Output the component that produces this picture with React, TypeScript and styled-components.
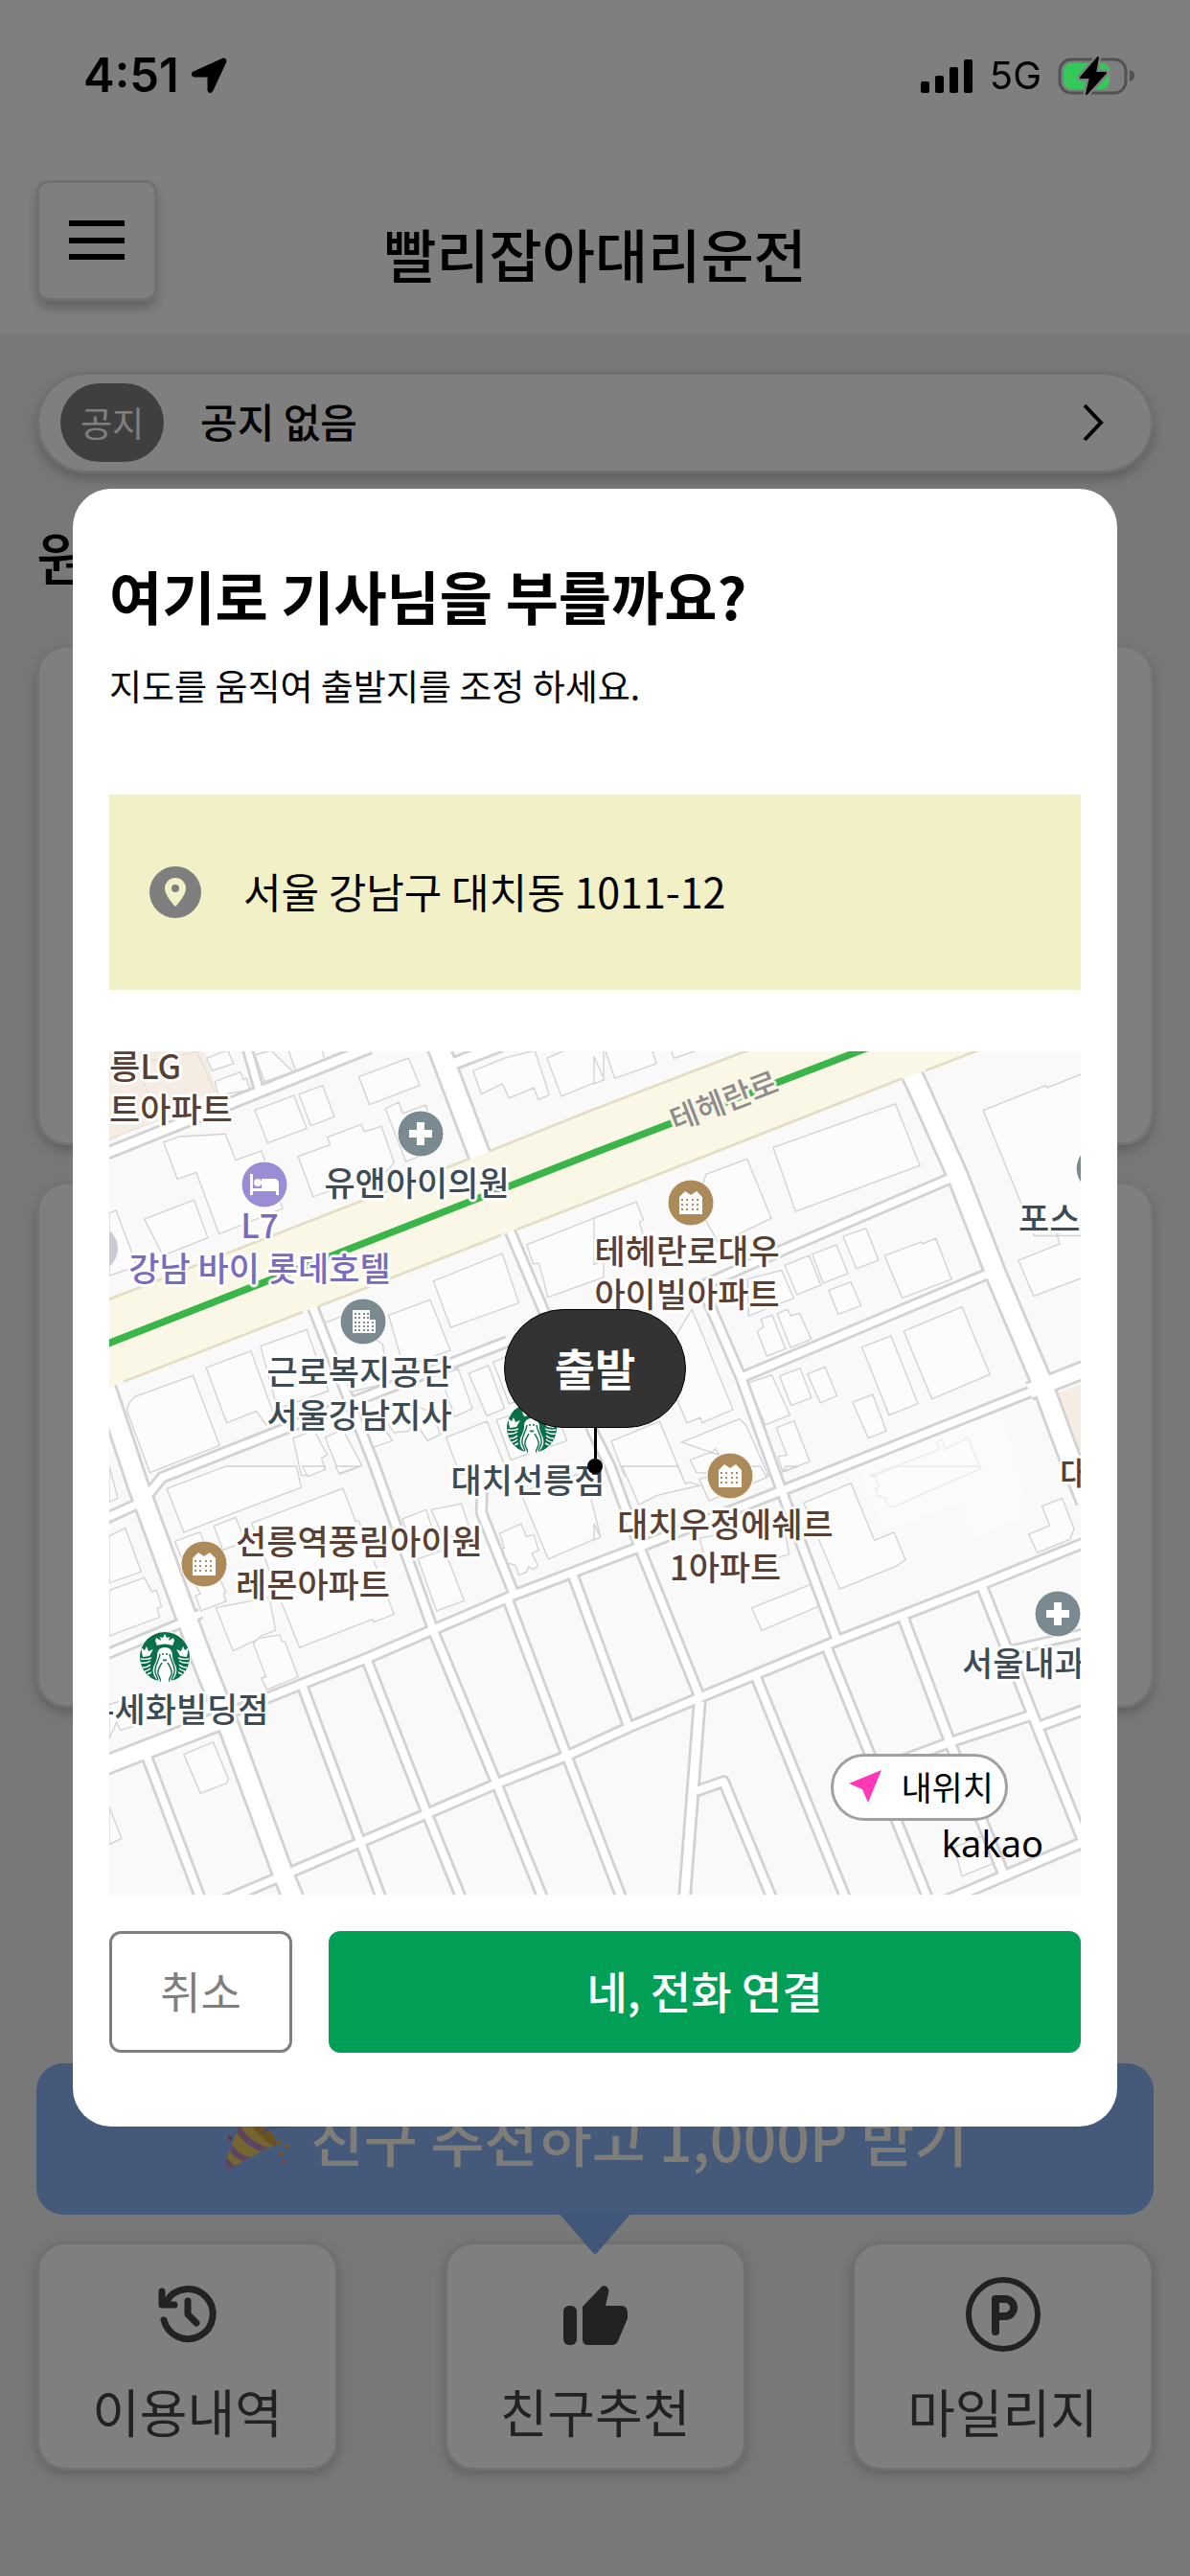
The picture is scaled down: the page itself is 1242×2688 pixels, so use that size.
import React from 'react';
import styled, { createGlobalStyle } from 'styled-components';

const GlobalStyle = createGlobalStyle`
  * { box-sizing: border-box; }
  body {
    margin: 0;
    background: #f0f0f0;
    color: #000;
    font-family: 'Noto Sans CJK KR', 'Noto Sans', sans-serif;
  }
  h1, h2, p { margin: 0; }
  button { font-family: inherit; color: inherit; padding: 0; cursor: pointer; }
`;

/* ---------- page behind the dialog ---------- */

const Page = styled.div`
  min-height: 100vh;
  display: flex;
  flex-direction: column;
`;

const Header = styled.header`
  background: #fff;
  padding-bottom: 34px;
`;

/* The system status bar stays above the dimmed overlay. */
const StatusBar = styled.div`
  position: relative;
  z-index: 3;
  display: flex;
  justify-content: space-between;
  align-items: center;
  height: 188px;
  padding: 0 58px 30px 87px;
  font-family: Inter, 'Noto Sans', sans-serif;
`;

const StatusGroup = styled.div<{ $gap: number }>`
  display: flex;
  align-items: center;
  gap: ${(p) => p.$gap}px;
`;

const Clock = styled.span`
  font-size: 49px;
  font-weight: 600;
  line-height: 60px;
`;

const Network = styled.span`
  font-size: 40px;
  line-height: 60px;
`;

const TitleRow = styled.div`
  display: grid;
  grid-template-columns: 1fr auto 1fr;
  align-items: end;
  padding: 0 38px;
`;

const MenuButton = styled.button`
  display: flex;
  align-items: center;
  justify-content: center;
  width: 126px;
  height: 126px;
  background: #fff;
  border: 3px solid #e0e0e0;
  border-radius: 12px;
  box-shadow: 0 8px 12px rgba(0, 0, 0, 0.22);
`;

const AppTitle = styled.h1`
  font-size: 60px;
  font-weight: 500;
  line-height: 100px;
`;

const Main = styled.main`
  flex: 1;
  display: flex;
  flex-direction: column;
  padding: 40px 38px 110px;
`;

const Notice = styled.button`
  display: flex;
  align-items: center;
  gap: 38px;
  width: 100%;
  height: 106px;
  padding: 0 48px 0 22px;
  background: #fff;
  border: 3px solid #e0e0e0;
  border-radius: 53px;
  box-shadow: 0 6px 12px rgba(0, 0, 0, 0.22);
`;

const NoticeBadge = styled.span`
  width: 108px;
  padding-bottom: 2px;
  border-radius: 42px;
  background: #7f7f7f;
  color: #fff;
  font-size: 36px;
  line-height: 80px;
`;

const NoticeText = styled.span`
  flex: 1;
  padding-bottom: 4px;
  text-align: left;
  font-size: 42px;
  font-weight: 500;
  line-height: 60px;
`;

const SectionTitle = styled.h2`
  margin: 46px 0 53px;
  font-size: 60px;
  font-weight: 500;
  line-height: 80px;
`;

const Cards = styled.div`
  display: grid;
  gap: 38px;
`;

const Card = styled.section<{ $height: number }>`
  height: ${(p) => p.$height}px;
  background: #fff;
  border: 3px solid #e6e6e6;
  border-radius: 32px;
  box-shadow: 0 6px 12px rgba(0, 0, 0, 0.2);
`;

const Footer = styled.footer`
  display: grid;
  gap: 28px;
  margin-top: auto;
`;

const Banner = styled.button`
  position: relative;
  display: flex;
  align-items: center;
  justify-content: center;
  gap: 16px;
  height: 158px;
  padding-bottom: 6px;
  border: 0;
  border-radius: 28px;
  background: #8ab4f4;
  color: #fffaf0;
  font-size: 61px;
  font-weight: 500;
`;

const BannerTail = styled.svg`
  position: absolute;
  left: 50%;
  top: 156px;
  margin-left: -39px;
  z-index: 1;
`;

const Shortcuts = styled.nav`
  display: flex;
  justify-content: space-between;
`;

const Shortcut = styled.button`
  display: flex;
  flex-direction: column;
  align-items: center;
  justify-content: center;
  gap: 26px;
  width: 315px;
  height: 239px;
  padding-top: 10px;
  background: #fff;
  border: 3px solid #e0e0e0;
  border-radius: 30px;
  box-shadow: 0 4px 12px rgba(0, 0, 0, 0.2);
  color: #444;
  font-size: 54px;
  line-height: 72px;
`;

/* ---------- dialog ---------- */

const Overlay = styled.div`
  position: fixed;
  inset: 0;
  z-index: 2;
  display: flex;
  align-items: center;
  padding: 40px 76px 0;
  background: rgba(0, 0, 0, 0.5);
`;

const Dialog = styled.div`
  flex: 1;
  padding: 75px 38px 77px;
  background: #fff;
  border-radius: 40px;
`;

const DialogTitle = styled.h2`
  font-size: 60px;
  font-weight: 600;
  line-height: 72px;
`;

const DialogHint = styled.p`
  margin-top: 34px;
  font-size: 37px;
  line-height: 48px;
`;

const Address = styled.div`
  display: flex;
  align-items: center;
  gap: 44px;
  height: 204px;
  margin: 90px 0 64px;
  padding: 0 42px;
  background: #f2f0c6;
`;

const AddressText = styled.span`
  padding-bottom: 4px;
  font-size: 43px;
  line-height: 60px;
`;

const Actions = styled.div`
  display: flex;
  gap: 38px;
  margin-top: 38px;
`;

const ActionButton = styled.button<{ $primary?: boolean }>`
  flex: ${(p) => (p.$primary ? '1' : '0 0 191px')};
  height: 127px;
  padding-bottom: 4px;
  border: 3px solid ${(p) => (p.$primary ? '#02a057' : '#7f7f7f')};
  border-radius: 12px;
  background: ${(p) => (p.$primary ? '#02a057' : '#fff')};
  color: ${(p) => (p.$primary ? '#fff' : '#7f7f7f')};
  font-size: 46px;
  font-weight: ${(p) => (p.$primary ? 500 : 400)};
`;

/* ---------- map ---------- */

const MapFrame = styled.div`
  position: relative;
  height: 880px;
  overflow: hidden;
  background: #f9f9f9;
`;

const MapDrawing = styled.svg`
  display: block;
  width: 100%;
  height: 100%;
`;

const halo = (c: string) =>
  `3px 0 1px ${c}, -3px 0 1px ${c}, 0 3px 1px ${c}, 0 -3px 1px ${c}, 2px 2px 1px ${c}, -2px -2px 1px ${c}, 2px -2px 1px ${c}, -2px 2px 1px ${c}`;

const Label = styled.span<{ $x: number; $y: number; $color: string; $left?: boolean }>`
  position: absolute;
  left: ${(p) => p.$x}px;
  top: ${(p) => p.$y}px;
  transform: translate(${(p) => (p.$left ? '0' : '-50%')}, -50%);
  text-align: ${(p) => (p.$left ? 'left' : 'center')};
  color: ${(p) => p.$color};
  font-size: 35px;
  font-weight: 500;
  line-height: 45px;
  white-space: pre;
  text-shadow: ${halo('#fff')};
`;

const RoadName = styled(Label)`
  transform: translate(-50%, -50%) rotate(-21deg);
  font-size: 32px;
  text-shadow: ${halo('#fbf7e6')};
`;

const Marker = styled.svg<{ $x: number; $y: number; $size: number }>`
  position: absolute;
  left: ${(p) => p.$x - p.$size / 2}px;
  top: ${(p) => p.$y - p.$size / 2}px;
`;

const Departure = styled.div`
  position: absolute;
  left: 50%;
  top: 269px;
  transform: translateX(-50%);
  display: flex;
  flex-direction: column;
  align-items: center;
`;

const DepartureLabel = styled.span`
  width: 190px;
  padding-bottom: 4px;
  border: 1px solid #000;
  border-radius: 62px;
  background: #333;
  color: #fff;
  font-size: 46px;
  font-weight: 700;
  line-height: 118px;
  text-align: center;
`;

const DepartureStem = styled.span`
  width: 3px;
  height: 32px;
  background: #000;
`;

const DepartureDot = styled.span`
  width: 16px;
  height: 16px;
  border-radius: 50%;
  background: #000;
`;

const LocateButton = styled.button`
  position: absolute;
  right: 76px;
  bottom: 77px;
  display: flex;
  align-items: center;
  gap: 18px;
  height: 70px;
  padding: 0 12px 2px 14px;
  background: #fff;
  border: 3px solid #a0a0a0;
  border-radius: 35px;
  font-size: 35px;
`;

const Provider = styled.span`
  position: absolute;
  right: 39px;
  bottom: 30px;
  font-family: 'Noto Sans', sans-serif;
  font-size: 38px;
  line-height: 48px;
`;

const SLATE = '#3d4b55';
const BROWN = '#5a4033';
const VIOLET = '#7a6bbd';
const EDGE = '#d2d2d2';

/* Street centre lines, drawn once as a grey casing and once as a white surface. */
const streets: { w: number; d: string }[] = [
  { w: 44, d: 'M0 345L480 152L830 12' },
  { w: 38, d: 'M442 0L485 150' },
  { w: 78, d: 'M1040 0L1180 370' },
  { w: 46, d: 'M1070 70L1240 5' },
  { w: 74, d: 'M-20 1010L15 1110L105 1380L300 1910L395 2150L555 2585L590 2670' },
  { w: 40, d: 'M0 1485L120 1430L180 1355L760 1125L1260 930' },
  { w: 40, d: 'M648 815L845 1320L1032 1845L1225 2310L1370 2670' },
  { w: 40, d: 'M1265 580L1375 840L1530 1220L1580 1320L1675 1580L1860 2040' },
  { w: 68, d: 'M0 2255L400 2100' },
  { w: 40, d: 'M380 2095L820 1920L1280 1722L1665 1575L2120 1395' },
  { w: 40, d: 'M2120 1395L2900 1085' },
  { w: 62, d: 'M2890 1085L3070 1015' },
  { w: 40, d: 'M370 2678L555 2600L800 2495L1225 2312L1445 2225L1640 2135L1855 2045L2290 1865L2740 1690L3070 1556' },
  { w: 38, d: 'M0 1910L240 1810L300 1780' },
  { w: 40, d: 'M620 2010L800 2495L865 2670' },
  { w: 40, d: 'M820 1925L1010 2410L1115 2670' },
  { w: 40, d: 'M1260 1735L1445 2225L1620 2680' },
  { w: 40, d: 'M1460 1650L1635 2125' },
  { w: 40, d: 'M1180 1400L1178 1465L1280 1720' },
  { w: 44, d: 'M1860 2055L1812 2680' },
  { w: 40, d: 'M1850 2335L1935 2305L2090 2680' },
  { w: 40, d: 'M2035 1975L2320 2680' },
  { w: 40, d: 'M2255 1880L2585 2700' },
  { w: 40, d: 'M1880 790L1990 1045L2110 1380L2290 1865' },
  { w: 42, d: 'M2495 1790L2645 2190L2812 2600' },
  { w: 42, d: 'M2740 1690L2912 2125L3070 2520' },
  { w: 40, d: 'M2420 2265L2650 2180L2890 2100' },
  { w: 40, d: 'M2915 2135L3070 2078' },
  { w: 42, d: 'M2600 2690L3070 2490' },
  { w: 74, d: 'M2510 70L2535 120L2665 410L2790 730L2930 1060L3030 1330L3070 1430' },
  { w: 40, d: 'M1870 755L2130 640L2680 405' },
  { w: 40, d: 'M1985 1045L2770 715' },
  { w: 40, d: 'M130 2220L300 2670' },
  { w: 36, d: 'M2830 1895L3070 1840' },
];

/* Building outlines, one list per quarter of the map. */
const northWest =
  'M320 45L385 20L404 62L337 84Z M345 118L425 88L434 112L444 108L455 145L355 160Z M470 35L520 21L590 88L500 118Z M600 92L575 21H680L690 55Z M795 103L950 45L985 130L828 190Z M470 207L592 162L632 265L510 310Z M608 158L682 130L718 228L645 256Z M878 203L920 183L932 218L1005 192L1040 330L942 368Z M185 308L235 290L378 282L410 364L490 335L557 515L358 594L287 402L228 423Z M125 548L280 488L323 606L183 662Z M605 352L705 316L697 292L802 252L812 275L866 258L905 372L880 400L652 478Z M15 530L36 520L102 695L15 725Z M1152 85L1250 45L1345 21L1390 160L1356 174L1342 138L1264 170L1244 125L1178 157Z M1383 45L1440 21H1560V110L1428 164Z M1028 742L1243 655L1295 810L1082 886Z M888 848L1018 800L1081 958L935 1010Z M488 945L632 893L700 1085L540 1140Z M318 1012L458 960L530 1160L505 1190L475 1148L382 1184Z M70 1145Q75 1118 97 1102L277 1037L360 1255L142 1340Z M675 878L745 850L870 940L885 1060L760 1090Z M1320 628L1560 533V730L1385 792L1372 735L1356 685L1340 688Z M1050 1040L1105 1015L1150 1140L1095 1165Z M1138 1030L1200 1005L1250 1140L1195 1163Z M1068 1230L1195 1180L1260 1340L1110 1345Z M840 1150L900 1240L835 1262L800 1170Z M905 1215L950 1210L970 1180L1000 1225L1010 1240L1050 1220L1020 1150L940 1120L860 1150Z M590 1232L655 1208L696 1284L678 1295L690 1325L640 1348L615 1348Z M690 1230L745 1205L805 1318L735 1345Z M1215 995L1300 960L1340 1100L1265 1125Z M1225 1175L1400 1120L1445 1240L1270 1300Z';
const northEast =
  'M35 21L65 108L195 62L182 21Z M240 21L250 46L330 18Z M0 40L32 112L0 125Z M560 324L942 188L1018 380L630 524Z M350 408L478 360L554 545L390 625L320 500Z M0 545L132 494L154 550L142 558L160 620L0 690Z M778 602L850 577L889 676L820 703Z M682 658L757 628L794 718L716 748Z M596 692L672 662L709 754L634 784Z M480 735L586 708L624 795L483 850Z M733 770L803 745L834 818L763 845Z M908 662L1022 620L1026 625L1068 608L1117 736L963 794Z M510 898L530 886L522 860L557 848L598 953L540 976Z M572 843L605 830L614 850L642 842L679 923L614 949Z M837 948L928 913L1012 1124L922 1160Z M968 898L1150 822L1237 1033L1056 1110Z M580 1038L644 1014L679 1106L616 1130Z M667 1032L722 1010L759 1100L707 1122Z M808 1120L871 1096L913 1210L857 1232Z M570 1200L625 1178L674 1305L590 1338L575 1290L602 1285Z M480 1060L555 1035L612 1160L535 1190Z M1216 208L1412 130L1416 138L1530 92V600L1376 600Z M1326 677L1456 625L1445 595L1530 565V730L1374 788Z M274 1245L455 1172L475 1192L545 1350L320 1340L300 1300L370 1275L380 1265L392 1285Z M54 1242L205 1180L275 1350H95Z M290 1185L210 990L305 830L325 875L434 1143L338 1184L332 1168Z M860 1350L1080 1268L1070 1245L1087 1236L1098 1268L1168 1230L1208 1325L1140 1355Z';
const southWest =
  'M195 70L380 0H600L615 66L248 206Z M618 0L636 32L690 10L686 0Z M722 0L733 22L800 0Z M15 0L42 100L15 112Z M15 218L65 193L115 330L15 365Z M15 388L125 348L148 392L162 388L178 438L165 445L172 472L15 530Z M220 235L298 206L315 245L380 395L372 398L380 422L302 452L285 405L300 398L260 330Z M342 187L410 160L440 235L370 262Z M460 178L745 69L785 172L795 172L905 462L842 487L838 478L610 566L555 430Z M348 442L515 410L535 512L485 532L480 540L402 577Z M465 553L483 537L548 527L555 548L565 550L605 658L508 698L490 662L505 658Z M930 165L1005 136L1030 210L960 235Z M1022 136L1115 117L1145 205L1060 225Z M980 290L1062 260L1124 420L1038 452Z M1300 80L1500 20L1550 220L1387 290Z M1235 210L1302 180L1318 220L1342 214L1357 262L1335 272L1355 310L1342 322L1325 314L1320 330L1295 340L1285 310L1255 300L1235 262L1250 255Z M248 900L340 862L388 978L382 990L300 1022Z M15 1065L54 1163L15 1182Z M15 745L60 730L95 810L50 825L38 800L15 850Z';
const southEast =
  'M88 0L140 120L200 90L330 60L315 55L300 50L285 55L262 0Z M328 40L500 0H520L540 35L360 108Z M590 15L640 0H600Z M655 115L803 53L876 232L937 206L973 292L945 312L768 384L705 235Z M878 30L950 0H1205L1210 6L940 125L920 127L910 100L885 92L880 70L890 65Z M1400 125L1463 100L1500 195L1488 228L1385 270L1358 212L1424 185Z M493 443L675 370L705 436L524 513Z M330 225L590 175L610 275L360 345Z M1125 1190L1215 1155L1250 1240L1150 1280Z M0 180L20 222L0 230Z';

function StreetMap() {
  return (
    <MapDrawing viewBox="15 21 3036 2640" preserveAspectRatio="xMidYMid slice" aria-hidden="true">
      <path fill="#f5ede3" d="M0 0H305L350 150L200 215L15 305Z" />
      <path fill="none" stroke="#e3dad0" strokeWidth="3" d="M15 75L60 60M140 55L290 25L345 150M120 115L140 160M15 298L230 215" />
      <path fill="#f5ede3" d="M2950 1100L3060 1060V1400L3010 1280Z" />
      <g fill="#fcfcfc" stroke={EDGE} strokeWidth="4">
        <path d={northWest} />
        <path d={northEast} transform="translate(1530 0)" />
        <path d={southWest} transform="translate(0 1320)" />
        <path d={southEast} transform="translate(1530 1320)" />
      </g>
      <path
        fill="#fcfcfc"
        d="M2350 1320L2800 1140L2880 1400L2860 1485L2715 1542L2670 1440L2430 1525Z"
        opacity="0.6"
      />
      <g fill="none" stroke={EDGE} strokeLinejoin="round">
        {streets.map((s) => (
          <path key={s.d} d={s.d} strokeWidth={s.w} />
        ))}
      </g>
      <g fill="none" stroke="#fff" strokeLinejoin="round">
        {streets.map((s) => (
          <path key={s.d} d={s.d} strokeWidth={s.w - 17} />
        ))}
      </g>
      <path
        d="M0 804L1140 360L1205 335L1530 205L2030 13H2750L2565 84L2490 110L1530 487L1240 598L670 820L620 838L60 1056L0 1080Z"
        fill="#fbf7e6"
      />
      <path
        d="M0 804L1140 360M1205 335L1530 205L2030 13M2750 13L2565 84M2490 110L1530 487L1290 580M1240 598L670 820M620 838L60 1056"
        fill="none"
        stroke="#e3ddc2"
        strokeWidth="8"
      />
      <path d="M0 941L1530 341L2400 7" fill="none" stroke="#3ab54a" strokeWidth="22" />
      <circle cx="-30" cy="640" r="72" fill="#c9cbd0" />
      <circle cx="3110" cy="390" r="72" fill="#7b8a91" />
    </MapDrawing>
  );
}

type PinKind = 'clinic' | 'hotel' | 'office' | 'home';
const pinColor: Record<PinKind, string> = {
  clinic: '#7b8a91',
  hotel: '#9a8dd6',
  office: '#7b8a91',
  home: '#ad8a59',
};

function windows(xs: number[], ys: number[]) {
  return ys.flatMap((y) => xs.map((x) => <rect key={`${x}-${y}`} x={x} y={y} width="2" height="2" />));
}

function Pin({ kind, x, y }: { kind: PinKind; x: number; y: number }) {
  return (
    <Marker $x={x} $y={y} $size={50} width="50" height="50" viewBox="0 0 50 50" aria-hidden="true">
      <circle cx="25" cy="25" r="24" fill={pinColor[kind]} stroke="#fff" strokeWidth="1" />
      {kind === 'clinic' && <path fill="#fff" d="M21 13h8v8h8v8h-8v8h-8v-8h-8v-8h8z" />}
      {kind === 'hotel' && (
        <g fill="#fff">
          <path d="M10 14h3v15h9V19h13q5 0 5 5v12h-3v-4H13v4h-3z" />
          <circle cx="18" cy="23" r="4" />
        </g>
      )}
      {kind === 'office' && (
        <>
          <path fill="#fff" d="M14 13h18v10h6v14H14z" />
          <g fill={pinColor.office}>
            {windows([16, 20, 25, 29], [16, 20])}
            {windows([16, 20, 25, 29, 34], [25, 29, 33])}
          </g>
        </>
      )}
      {kind === 'home' && (
        <>
          <path fill="#fff" d="M13 19l6-6 6 4 6-4 6 6v18H13z" />
          <g fill={pinColor.home}>{windows([15, 20, 26, 31], [21, 26, 31])}</g>
        </>
      )}
    </Marker>
  );
}

function CoffeeLogo({ x, y }: { x: number; y: number }) {
  return (
    <Marker $x={x} $y={y} $size={54} width="54" height="54" viewBox="0 0 54 54" aria-hidden="true">
      <circle cx="27" cy="27" r="27" fill="#fff" />
      <circle cx="27" cy="27" r="26" fill="#0a7049" />
      <path fill="#fff" d="M27 3l2 4 3-1-1 4 5-3 1 3-2 5q-8-3-16 0l-2-5 1-3 5 3-1-4 3 1z" />
      <path fill="#fff" d="M2 17l4 3 2-4 2 5 5-2-4 7-7 1zM52 17l-4 3-2-4-2 5-5-2 4 7 7 1z" />
      <path fill="#fff" d="M27 17c-6 0-8 4-8 9 0 7-6 11-4 18 1 4 3 6 5 8h14c2-2 4-4 5-8 2-7-4-11-4-18 0-5-2-9-8-9z" />
      <g fill="none" stroke="#0a7049" strokeWidth="1.4">
        <path d="M22 24c-1 8-6 11-5 19 1 3 2 5 3 8M32 24c1 8 6 11 5 19-1 3-2 5-3 8" />
        <path d="M24 33c-2 4-5 7-4 12l3 7M30 33c2 4 5 7 4 12l-3 7" />
        <path d="M24 24h2M28 24h2M25 30q2 1 4 0" />
      </g>
      <g fill="none" stroke="#fff" strokeWidth="1.4">
        <path d="M2 29q6 1 11-1M2 33q6 1 10-2M4 38q5 0 8-3M6 42q4-1 6-3M9 45l4-2" />
        <path d="M52 29q-6 1-11-1M52 33q-6 1-10-2M50 38q-5 0-8-3M48 42q-4-1-6-3M45 45l-4-2" />
      </g>
      <path fill="#fff" d="M24 38q3-3 6 0l1 15h-8z" />
    </Marker>
  );
}

function PartyPopper() {
  return (
    <svg width="76" height="76" viewBox="0 0 76 76" aria-hidden="true">
      <path fill="#e9cb62" d="M22 16Q40 22 56 46L8 72Q2 72 3 65z" />
      <path fill="#b98ac4" d="M18 26Q27 44 48 50L40 54Q22 46 15 34zM10 46Q17 58 30 60L22 64Q11 60 8 53zM5 60q3 6 9 9l-6 3q-5 0-5-7z" />
      <path fill="#d9a441" d="M22 16q10-4 24 12t10 20q-5 2-18-12T22 16z" />
      <path d="M42 34q10-8 28-6" stroke="#7f9ae0" strokeWidth="3" fill="none" />
      <path d="M32 22q2-10-4-18" stroke="#e2586a" strokeWidth="4" fill="none" />
      <g fill="#e9a950">
        <rect x="58" y="42" width="4" height="4" />
        <rect x="66" y="46" width="4" height="4" />
        <rect x="60" y="54" width="4" height="4" />
      </g>
      <rect x="62" y="62" width="4" height="4" fill="#e58b95" />
      <rect x="6" y="38" width="4" height="4" fill="#e2586a" />
      <rect x="46" y="24" width="4" height="4" fill="#e58b95" />
    </svg>
  );
}

export default function App() {
  return (
    <>
      <GlobalStyle />
      <Page>
        <Header>
          <StatusBar>
            <StatusGroup $gap={12}>
              <Clock>4:51</Clock>
              <svg width="38" height="38" viewBox="0 0 38 38" aria-label="위치 사용 중">
                <path
                  d="M3 16L34 2Q36 2 36 4L22 34Q20 37 19 34V19H4Q1 18 3 16Z"
                  stroke="#000"
                  strokeWidth="3"
                  strokeLinejoin="round"
                />
              </svg>
            </StatusGroup>
            <StatusGroup $gap={17}>
              <svg width="55" height="36" viewBox="0 0 55 36" aria-label="신호 세기">
                <rect x="0" y="24" width="9" height="12" rx="2" />
                <rect x="15" y="18" width="9" height="18" rx="2" />
                <rect x="30" y="9" width="9" height="27" rx="2" />
                <rect x="45" y="1" width="9" height="35" rx="2" />
              </svg>
              <Network>5G</Network>
              <svg width="80" height="42" viewBox="0 0 80 42" aria-label="충전 중">
                <rect x="2" y="4" width="69" height="35" rx="12" fill="none" stroke="#525252" strokeWidth="3" />
                <path d="M75 15q5 1 5 6t-5 6z" fill="#525252" />
                <rect x="6" y="8" width="48" height="27" rx="8" fill="#34c759" />
                <path d="M42 2L24 23h10l-4 17L50 18H39z" stroke="#7f7f7f" strokeWidth="7" strokeLinejoin="round" />
                <path d="M42 2L24 23h10l-4 17L50 18H39z" stroke="#000" strokeWidth="2" strokeLinejoin="round" />
              </svg>
            </StatusGroup>
          </StatusBar>
          <TitleRow>
            <MenuButton aria-label="메뉴">
              <svg width="58" height="42" viewBox="0 0 58 42">
                <path d="M0 0h58v6H0zM0 18h58v6H0zM0 35h58v6H0z" />
              </svg>
            </MenuButton>
            <AppTitle>빨리잡아대리운전</AppTitle>
          </TitleRow>
        </Header>
        <Main>
          <Notice>
            <NoticeBadge>공지</NoticeBadge>
            <NoticeText>공지 없음</NoticeText>
            <svg width="24" height="42" viewBox="0 0 24 42" aria-hidden="true">
              <path d="M3 3l17 18L3 39" fill="none" stroke="#000" strokeWidth="4" />
            </svg>
          </Notice>
          <SectionTitle>원</SectionTitle>
          <Cards>
            <Card $height={522} />
            <Card $height={549} />
          </Cards>
          <Footer>
            <Banner>
              <PartyPopper />
              친구 추천하고 1,000P 받기
              <BannerTail width="78" height="44" viewBox="0 0 78 44" aria-hidden="true">
                <path d="M1 0h76L41 42q-2 2-4 0z" fill="#81aff5" />
              </BannerTail>
            </Banner>
            <Shortcuts>
              <Shortcut>
                <svg width="78" height="78" viewBox="0 0 78 78" aria-hidden="true">
                  <g fill="none" stroke="#444" strokeWidth="7" strokeLinecap="round" strokeLinejoin="round">
                    <path d="M14 45A26 26 0 1 0 17 25" />
                    <path d="M12 15v14h13" />
                    <path d="M39 25v14l9 9" />
                  </g>
                  <path d="M11 28V18l10 10z" fill="#444" />
                </svg>
                이용내역
              </Shortcut>
              <Shortcut>
                <svg width="78" height="78" viewBox="0 0 78 78" aria-hidden="true">
                  <g fill="#444">
                    <rect x="6" y="30" width="14" height="41" rx="6" />
                    <path d="M26 31L45 11Q48 7 52 11Q54 13 53 17L50 30H67Q73 31 73 37V43L63 67Q61 71 57 71H32Q26 71 26 65Z" />
                  </g>
                </svg>
                친구추천
              </Shortcut>
              <Shortcut>
                <svg width="78" height="78" viewBox="0 0 78 78" aria-hidden="true">
                  <g fill="none" stroke="#444" strokeLinecap="round" strokeLinejoin="round">
                    <circle cx="39" cy="39" r="36" strokeWidth="6" />
                    <path d="M31 57V23H41a9 9 0 0 1 0 18H31" strokeWidth="8" />
                  </g>
                </svg>
                마일리지
              </Shortcut>
            </Shortcuts>
          </Footer>
        </Main>
      </Page>

      <Overlay>
        <Dialog role="dialog" aria-modal="true" aria-labelledby="dialog-title">
          <DialogTitle id="dialog-title">여기로 기사님을 부를까요?</DialogTitle>
          <DialogHint>지도를 움직여 출발지를 조정 하세요.</DialogHint>
          <Address>
            <svg width="54" height="54" viewBox="0 0 54 54" aria-hidden="true">
              <circle cx="27" cy="27" r="27" fill="#7f7f7f" />
              <path
                d="M27 12a11 11 0 0 0-11 11c0 8 11 19 11 19s11-11 11-19a11 11 0 0 0-11-11z"
                fill="#f2f0c6"
              />
              <circle cx="27" cy="23" r="4" fill="#7f7f7f" />
            </svg>
            <AddressText>서울 강남구 대치동 1011-12</AddressText>
          </Address>
          <MapFrame>
            <StreetMap />
            <Label $left $x={0} $y={36} $color={BROWN}>{'릉LG\n트아파트'}</Label>
            <Label $x={321} $y={135} $color={SLATE}>유앤아이의원</Label>
            <Label $x={157} $y={202} $color={VIOLET}>{'L7\n강남 바이 롯데호텔'}</Label>
            <Label $x={261} $y={355} $color={SLATE}>{'근로복지공단\n서울강남지사'}</Label>
            <Label $x={603} $y={229} $color={BROWN}>{'테헤란로대우\n아이빌아파트'}</Label>
            <Label $left $x={949} $y={172} $color={SLATE}>포스</Label>
            <Label $left $x={992} $y={438} $color={BROWN}>대</Label>
            <Label $left $x={132} $y={532} $color={BROWN}>{'선릉역풍림아이원\n레몬아파트'}</Label>
            <Label $x={643} $y={514} $color={BROWN}>{'대치우정에쉐르\n1아파트'}</Label>
            <Label $left $x={-7} $y={684} $color={SLATE}>-세화빌딩점</Label>
            <Label $left $x={890} $y={636} $color={SLATE}>서울내과</Label>
            <RoadName $x={641} $y={50} $color="#8c8c8c">테헤란로</RoadName>
            <Pin kind="clinic" x={325} y={86} />
            <Pin kind="hotel" x={162} y={139} />
            <Pin kind="office" x={265} y={282} />
            <Pin kind="home" x={607} y={158} />
            <Pin kind="home" x={648} y={443} />
            <Pin kind="home" x={99} y={535} />
            <Pin kind="clinic" x={990} y={587} />
            <CoffeeLogo x={58} y={632} />
            <CoffeeLogo x={441} y={393} />
            <Label $x={437} $y={445} $color={SLATE}>대치선릉점</Label>
            <Departure>
              <DepartureLabel>출발</DepartureLabel>
              <DepartureStem />
              <DepartureDot />
            </Departure>
            <LocateButton>
              <svg width="38" height="38" viewBox="0 0 38 38" aria-hidden="true">
                <path d="M2 16L36 2L22 36L16 22z" fill="#ff38b8" />
              </svg>
              내위치
            </LocateButton>
            <Provider>kakao</Provider>
          </MapFrame>
          <Actions>
            <ActionButton>취소</ActionButton>
            <ActionButton $primary>네, 전화 연결</ActionButton>
          </Actions>
        </Dialog>
      </Overlay>
    </>
  );
}
